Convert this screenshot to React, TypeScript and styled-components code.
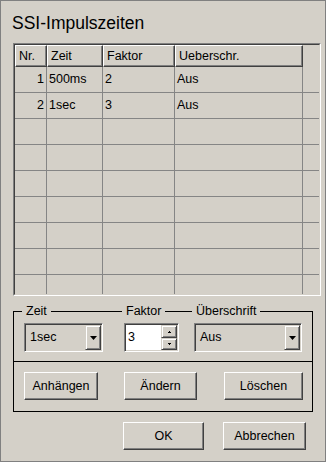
import React from "react";
import styled, { createGlobalStyle } from "styled-components";

const GlobalStyle = createGlobalStyle`
  html, body { margin: 0; padding: 0; background: #d4d0c8; }
  body { font-family: "Liberation Sans", Arial, sans-serif; }
  * { box-sizing: border-box; }
`;

const Window = styled.div`
  width: 326px;
  height: 462px;
  border: 1px solid #808080;
  background: #d4d0c8;
  font-family: "Liberation Sans", Arial, sans-serif;
  font-size: 12.5px;
  color: #000;
  display: flex;
  flex-direction: column;
  align-items: flex-start;
`;

const Title = styled.h1`
  margin: 12px 0 0 11px;
  font-size: 17.5px;
  font-weight: normal;
  line-height: 20px;
  height: 20px;
  white-space: nowrap;
`;

const TableFrame = styled.div`
  margin: 10px 0 0 12px;
  width: 308px;
  height: 253px;
  border: 1px solid;
  border-color: #808080 #fff #fff #808080;
`;

const TableInner = styled.div`
  height: 100%;
  border: 1px solid;
  border-color: #404040 #d4d0c8 #d4d0c8 #404040;
  overflow: hidden;
`;

const HeaderRow = styled.div`
  display: flex;
  height: 22px;
`;

const HeaderCell = styled.div<{ $w: number }>`
  width: ${(p) => p.$w}px;
  flex: none;
  height: 22px;
  padding-left: 3px;
  line-height: 20px;
  border: 1px solid;
  border-color: #fff #404040 #404040 #fff;
  box-shadow: inset -1px -1px #808080;
  white-space: nowrap;
  overflow: hidden;
`;

const HeaderFiller = styled.div`
  flex: 1;
`;

const Row = styled.div`
  display: flex;
  height: 26px;
  border-bottom: 1px solid #858585;
`;

const Cell = styled.div<{ $w: number; $right?: boolean; $last?: boolean }>`
  width: ${(p) => p.$w}px;
  flex: none;
  height: 25px;
  line-height: 25px;
  padding: 0 2px;
  text-align: ${(p) => (p.$right ? "right" : "left")};
  border-right: ${(p) => (p.$last ? "none" : "1px solid #858585")};
  white-space: nowrap;
  overflow: hidden;
`;

const Group = styled.div`
  margin: 15px 0 0 12px;
  width: 300px;
  height: 101px;
  border: 1px solid #000;
`;

const FieldsRow = styled.div`
  display: flex;
  height: 50px;
  padding-left: 10px;
  border-bottom: 1px solid #000;
`;

const Field = styled.div<{ $gap: number }>`
  display: flex;
  flex-direction: column;
  align-items: flex-start;
  margin-left: ${(p) => p.$gap}px;
`;

const Caption = styled.span`
  margin: -8px 0 0 -2px;
  padding: 0 4px;
  height: 14px;
  line-height: 14px;
  background: #d4d0c8;
  white-space: nowrap;
`;

const Sunken = styled.div<{ $w: number }>`
  width: ${(p) => p.$w}px;
  height: 29px;
  margin-top: 5px;
  display: flex;
  padding: 1px;
  border: 1px solid;
  border-color: #808080 #fff #fff #808080;
  box-shadow: inset 1px 1px #404040, inset -1px -1px #d4d0c8;
`;

const ComboText = styled.div`
  flex: 1;
  padding-left: 4px;
  line-height: 25px;
`;

const Bevel = styled.div<{ $h: number }>`
  width: 16px;
  height: ${(p) => p.$h}px;
  flex: none;
  display: flex;
  align-items: center;
  justify-content: center;
  background: #d4d0c8;
  border: 1px solid;
  border-color: #d4d0c8 #404040 #404040 #d4d0c8;
  box-shadow: inset 1px 1px #fff, inset -1px -1px #808080;
`;

const SpinInput = styled.div`
  flex: 1;
  background: #fff;
  padding-left: 2px;
  line-height: 25px;
`;

const SpinButtons = styled.div`
  display: flex;
  flex-direction: column;
`;

const ButtonsRow = styled.div`
  display: flex;
  height: 49px;
  padding: 10px 0 0 10px;
`;

const Button = styled.button<{ $w: number; $gap?: number }>`
  width: ${(p) => p.$w}px;
  height: 28px;
  flex: none;
  margin: 0 0 0 ${(p) => p.$gap ?? 0}px;
  padding: 0;
  background: #d4d0c8;
  font: inherit;
  color: #000;
  border: 1px solid;
  border-color: #fff #404040 #404040 #fff;
  box-shadow: inset -1px -1px #808080;
`;

const DialogButtons = styled.div`
  display: flex;
  margin: 10px 0 0 122px;
  gap: 19px;
`;

const DownArrow = () => (
  <svg width="7" height="4" viewBox="0 0 7 4">
    <polygon points="0,0 7,0 3.5,4" fill="#000" />
  </svg>
);

const TinyArrow = ({ up }: { up?: boolean }) => (
  <svg width="3" height="2" viewBox="0 0 3 2" shapeRendering="crispEdges">
    {up ? (
      <>
        <rect x="1" y="0" width="1" height="1" fill="#000" />
        <rect x="0" y="1" width="3" height="1" fill="#000" />
      </>
    ) : (
      <>
        <rect x="0" y="0" width="3" height="1" fill="#000" />
        <rect x="1" y="1" width="1" height="1" fill="#000" />
      </>
    )}
  </svg>
);

const COLS = [32, 56, 72, 128, 16];
const HEADERS = ["Nr.", "Zeit", "Faktor", "Ueberschr."];
const DATA = [
  ["1", "500ms", "2", "Aus"],
  ["2", "1sec", "3", "Aus"],
];
const ROW_COUNT = 9;

export default function App() {
  const rows = Array.from({ length: ROW_COUNT }, (_, i) => DATA[i] ?? ["", "", "", ""]);
  return (
    <>
      <GlobalStyle />
      <Window>
        <Title>SSI-Impulszeiten</Title>
        <TableFrame>
          <TableInner>
            <HeaderRow>
              {HEADERS.map((h, i) => (
                <HeaderCell key={h} $w={COLS[i]}>
                  {h}
                </HeaderCell>
              ))}
              <HeaderFiller />
            </HeaderRow>
            {rows.map((r, ri) => (
              <Row key={ri}>
                {r.map((v, ci) => (
                  <Cell key={ci} $w={COLS[ci]} $right={ci === 0}>
                    {v}
                  </Cell>
                ))}
                <Cell $w={COLS[4]} $last />
              </Row>
            ))}
          </TableInner>
        </TableFrame>
        <Group>
          <FieldsRow>
            <Field $gap={0}>
              <Caption>Zeit</Caption>
              <Sunken $w={79}>
                <ComboText>1sec</ComboText>
                <Bevel $h={25}>
                  <DownArrow />
                </Bevel>
              </Sunken>
            </Field>
            <Field $gap={21}>
              <Caption>Faktor</Caption>
              <Sunken $w={55}>
                <SpinInput>3</SpinInput>
                <SpinButtons>
                  <Bevel $h={13}>
                    <TinyArrow up />
                  </Bevel>
                  <Bevel $h={12}>
                    <TinyArrow />
                  </Bevel>
                </SpinButtons>
              </Sunken>
            </Field>
            <Field $gap={15}>
              <Caption>Überschrift</Caption>
              <Sunken $w={108}>
                <ComboText>Aus</ComboText>
                <Bevel $h={25}>
                  <DownArrow />
                </Bevel>
              </Sunken>
            </Field>
          </FieldsRow>
          <ButtonsRow>
            <Button $w={74}>Anhängen</Button>
            <Button $w={73} $gap={26}>
              Ändern
            </Button>
            <Button $w={79} $gap={27}>
              Löschen
            </Button>
          </ButtonsRow>
        </Group>
        <DialogButtons>
          <Button $w={81}>OK</Button>
          <Button $w={83}>Abbrechen</Button>
        </DialogButtons>
      </Window>
    </>
  );
}
